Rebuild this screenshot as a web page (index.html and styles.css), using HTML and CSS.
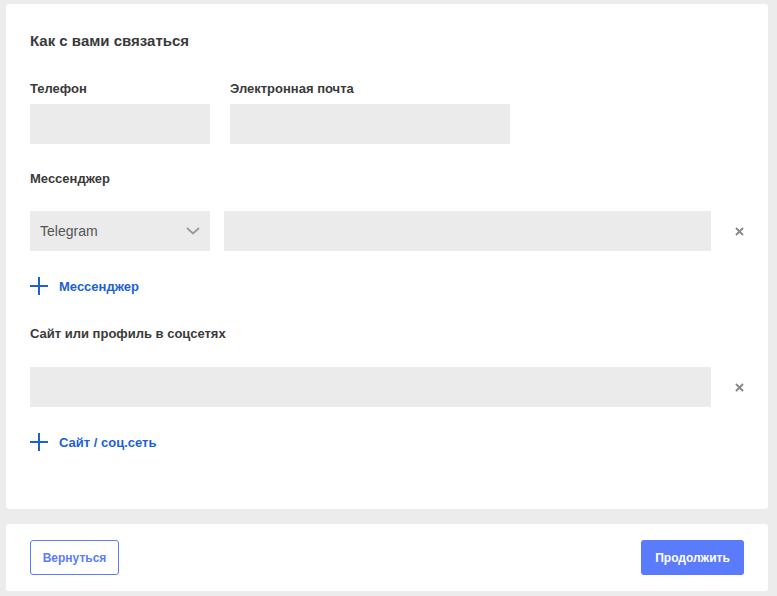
FILE: index.html
```html
<!DOCTYPE html>
<html lang="ru">
<head>
<meta charset="utf-8">
<link rel="stylesheet" href="styles.css">
</head>
<body>
<div class="page">
  <section class="card main">
    <h2 class="title">Как с вами связаться</h2>
    <div class="row two">
      <div class="field phone">
        <div class="label">Телефон</div>
        <div class="input"></div>
      </div>
      <div class="field email">
        <div class="label">Электронная почта</div>
        <div class="input"></div>
      </div>
    </div>
    <div class="label sec">Мессенджер</div>
    <div class="line">
      <div class="select">
        <span>Telegram</span>
        <svg class="chev" width="14" height="8" viewBox="0 0 14 8"><path d="M1 1l6 5.5L13 1" fill="none" stroke="#9a9a9a" stroke-width="1.8"/></svg>
      </div>
      <div class="input grow"></div>
      <div class="remove"><svg width="9" height="9" viewBox="0 0 9 9"><path d="M1 1l7 7M8 1L1 8" stroke="#8a8a8a" stroke-width="2"/></svg></div>
    </div>
    <div class="add"><svg width="18" height="18" viewBox="0 0 18 18"><path d="M9 0v18M0 9h18" stroke="#1d5fd6" stroke-width="2"/></svg><span>Мессенджер</span></div>
    <div class="label sec2">Сайт или профиль в соцсетях</div>
    <div class="line site">
      <div class="input grow"></div>
      <div class="remove"><svg width="9" height="9" viewBox="0 0 9 9"><path d="M1 1l7 7M8 1L1 8" stroke="#8a8a8a" stroke-width="2"/></svg></div>
    </div>
    <div class="add"><svg width="18" height="18" viewBox="0 0 18 18"><path d="M9 0v18M0 9h18" stroke="#1d5fd6" stroke-width="2"/></svg><span>Сайт / соц.сеть</span></div>
  </section>
  <section class="card footer">
    <button class="btn back">Вернуться</button>
    <button class="btn next">Продолжить</button>
  </section>
</div>
</body>
</html>
```
FILE: styles.css
```css
* { box-sizing: border-box; }
html, body { margin: 0; padding: 0; }
body {
  background: #ececec;
  font-family: "Liberation Sans", Arial, sans-serif;
  color: #333;
}
.page {
  padding: 4px 9px 0 6px;
  display: flex;
  flex-direction: column;
  gap: 15px;
}
.card {
  background: #fff;
  border-radius: 3px;
}
.main {
  height: 505px;
  padding: 27px 24px 0 24px;
  display: flex;
  flex-direction: column;
}
.title {
  margin: 0;
  font-size: 15px;
  line-height: 20px;
  font-weight: bold;
  color: #3a3a3a;
}
.row.two {
  display: flex;
  gap: 20px;
  margin-top: 30px;
}
.label {
  font-size: 13px;
  font-weight: bold;
  line-height: 16px;
  color: #3a3a3a;
}
.field .label { margin-bottom: 7px; }
.input {
  height: 40px;
  background: #ebebeb;
}
.phone { width: 180px; }
.email { width: 280px; }
.sec { margin-top: 27px; }
.line {
  display: flex;
  align-items: center;
  margin-top: 24px;
  gap: 14px;
}
.select {
  width: 180px;
  height: 40px;
  background: #ebebeb;
  display: flex;
  align-items: center;
  justify-content: space-between;
  padding: 0 10px 0 10px;
  font-size: 14px;
  color: #555;
}
.grow { flex: 1; }
.remove {
  width: 19px;
  display: flex;
  justify-content: flex-end;
}
.add {
  display: flex;
  align-items: center;
  gap: 11px;
  margin-top: 26px;
  font-size: 13px;
  font-weight: bold;
  color: #1d5fd6;
}
.sec2 { margin-top: 31px; }
.line.site { margin-top: 25px; }
.footer {
  height: 67px;
  display: flex;
  align-items: center;
  justify-content: space-between;
  padding: 0 24px;
}
.btn {
  height: 35px;
  border-radius: 3px;
  font-family: inherit;
  font-size: 12px;
  font-weight: bold;
  padding: 0 11px;
  cursor: pointer;
}
.back {
  background: #fff;
  border: 1px solid #5b7cfb;
  color: #5b7cfb;
  width: 89px;
}
.next {
  background: #5a7bfc;
  border: none;
  color: #fff;
  width: 103px;
}
```
